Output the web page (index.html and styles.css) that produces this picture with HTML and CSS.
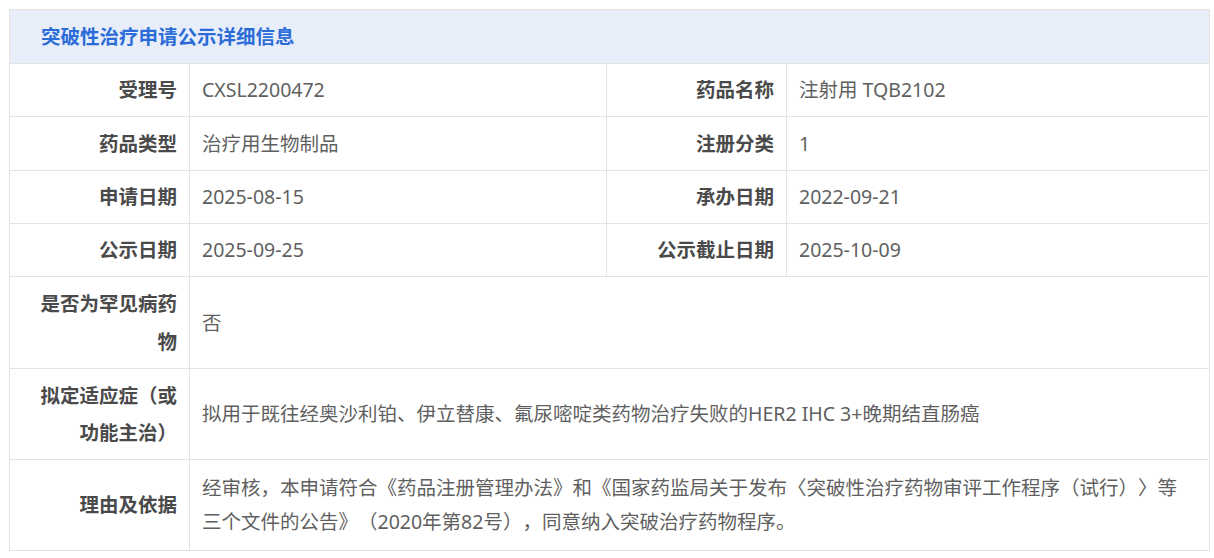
FILE: index.html
```html
<!DOCTYPE html>
<html lang="zh">
<head>
<meta charset="utf-8">
<link rel="stylesheet" href="styles.css">
</head>
<body>
<div class="page">
  <table class="info">
    <colgroup>
      <col class="c-label"><col class="c-value1"><col class="c-label"><col class="c-value2">
    </colgroup>
    <thead>
      <tr class="head-row"><th colspan="4" class="title">突破性治疗申请公示详细信息</th></tr>
    </thead>
    <tbody>
      <tr class="row">
        <td class="label">受理号</td><td class="value">CXSL2200472</td>
        <td class="label">药品名称</td><td class="value">注射用 TQB2102</td>
      </tr>
      <tr class="row row-lg">
        <td class="label">药品类型</td><td class="value">治疗用生物制品</td>
        <td class="label">注册分类</td><td class="value">1</td>
      </tr>
      <tr class="row">
        <td class="label">申请日期</td><td class="value">2025-08-15</td>
        <td class="label">承办日期</td><td class="value">2022-09-21</td>
      </tr>
      <tr class="row">
        <td class="label">公示日期</td><td class="value">2025-09-25</td>
        <td class="label">公示截止日期</td><td class="value">2025-10-09</td>
      </tr>
      <tr class="row tall tall-lg">
        <td class="label">是否为罕见病药物</td><td class="value" colspan="3">否</td>
      </tr>
      <tr class="row tall">
        <td class="label">拟定适应症（或功能主治）</td><td class="value" colspan="3">拟用于既往经奥沙利铂、伊立替康、氟尿嘧啶类药物治疗失败的HER2 IHC 3+晚期结直肠癌</td>
      </tr>
      <tr class="row tall">
        <td class="label">理由及依据</td><td class="value" colspan="3">经审核，本申请符合《药品注册管理办法》和《国家药监局关于发布〈突破性治疗药物审评工作程序（试行）〉等三个文件的公告》（2020年第82号），同意纳入突破治疗药物程序。</td>
      </tr>
    </tbody>
  </table>
</div>
</body>
</html>
```

FILE: styles.css
```css
html, body {
  margin: 0;
  padding: 0;
  background: #ffffff;
}
.page {
  padding: 9px 0 0 9px;
  font-family: "Noto Sans", "Noto Sans CJK SC", sans-serif;
  font-size: 19.5px;
  text-spacing-trim: space-all;
}
.info {
  width: 1200px;
  border-collapse: collapse;
  table-layout: fixed;
}
.c-label { width: 180px; }
.c-value1 { width: 417px; }
.c-value2 { width: 423px; }
.info th, .info td {
  border: 1px solid #e3e3e3;
}
.head-row {
  height: 54px;
}
.title {
  background: #e7eef9;
  color: #2b6cd8;
  font-weight: 700;
  text-align: left;
  padding: 0 0 0 31px;
  line-height: 30px;
}
.row {
  height: 53px;
}
.row.row-lg {
  height: 54px;
}
.row.tall {
  height: 91px;
}
.row.tall.tall-lg {
  height: 92px;
}
.label {
  text-align: right;
  font-weight: 700;
  color: #4a4a4a;
  padding: 0 12px 0 20px;
  line-height: 37.5px;
  vertical-align: middle;
}
.value {
  text-align: left;
  color: #5f5f5f;
  padding: 0 24px 0 12px;
  line-height: 34px;
  vertical-align: middle;
}
```
